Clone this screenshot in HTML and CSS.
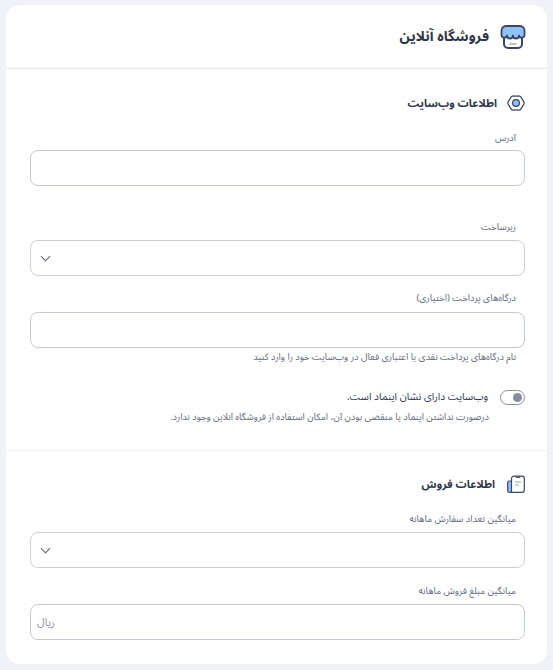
FILE: index.html
```html
<!DOCTYPE html>
<html lang="fa" dir="rtl">
<head>
  <meta charset="utf-8">
  <title>فروشگاه آنلاین</title>
  <link rel="stylesheet" href="styles.css">
</head>
<body>
  <div class="card">
    <div class="card-header">
      <svg class="header-icon" width="26" height="26" viewBox="0 0 26 26">
        <path d="M4 12v8a4 4 0 0 0 4 4h10a4 4 0 0 0 4-4v-8" fill="#fff" stroke="#3b4660" stroke-width="2"/>
        <path d="M6 2h14a4.500 4.500 0 0 1 4.500 4.500v4a2.800 2.800 0 0 1-5.500 1 3 3 0 0 1-6 0 3 3 0 0 1-6 0 2.800 2.800 0 0 1-5.500-1v-4A4.500 4.500 0 0 1 6 2z" fill="#8fc1fb" stroke="#3b4660" stroke-width="1.800" stroke-linejoin="round"/>
        <path d="M9.500 20h7" stroke="#b9bfcc" stroke-width="2"/>
      </svg>
      <h1>فروشگاه آنلاین</h1>
    </div>

    <div class="section">
      <div class="section-title">
        <svg width="18" height="18" viewBox="0 0 18 18">
          <path d="M6.300 1.800Q9 2.600 11.700 1.800 13.200 1.800 14 3.100L16.900 8Q17.400 9 16.900 10L14 14.900Q13.200 16.200 11.700 16.200 9 15.400 6.300 16.200 4.800 16.200 4 14.900L1.100 10Q.6 9 1.100 8L4 3.100Q4.800 1.800 6.300 1.800z" fill="none" stroke="#3b4660" stroke-width="1.300" stroke-linejoin="round"/>
          <circle cx="9" cy="9" r="3.400" fill="#8fc1fb" stroke="#3b4660" stroke-width="1.200"/>
        </svg>
        <h2>اطلاعات وب‌سایت</h2>
      </div>

      <label class="field-label first">آدرس</label>
      <div class="input"></div>

      <label class="field-label second">زیرساخت</label>
      <div class="input select"><span class="chevron"></span></div>

      <label class="field-label third">درگاه‌های پرداخت (اختیاری)</label>
      <div class="input"></div>
      <p class="hint">نام درگاه‌های پرداخت نقدی یا اعتباری فعال در وب‌سایت خود را وارد کنید</p>

      <div class="toggle-row">
        <span class="toggle"><span class="knob"></span></span>
        <span class="toggle-text">وب‌سایت دارای نشان اینماد است.</span>
      </div>
      <p class="toggle-note">درصورت نداشتن اینماد یا منقضی بودن آن، امکان استفاده از فروشگاه آنلاین وجود ندارد.</p>
    </div>

    <div class="section sales">
      <div class="section-title">
        <svg width="18" height="18" viewBox="0 0 18 18">
          <rect x=".7" y="6" width="4.300" height="11.300" rx="1.500" fill="#8fc1fb" stroke="#3b4660" stroke-width="1.200"/>
          <path d="M4.500 17.300H15a2.300 2.300 0 0 0 2.300-2.300V3.500A2.300 2.300 0 0 0 15 1.200H7a2.500 2.500 0 0 0-2.500 2.500z" fill="#fff" stroke="#3b4660" stroke-width="1.200"/>
          <path d="M9 1.200v1.200h4V1.200" fill="none" stroke="#3b4660" stroke-width="1"/>
          <path d="M8 7h6M8 10h4" stroke="#9aa3b5" stroke-width="1"/>
        </svg>
        <h2>اطلاعات فروش</h2>
      </div>

      <label class="field-label first">میانگین تعداد سفارش ماهانه</label>
      <div class="input select"><span class="chevron"></span></div>

      <label class="field-label fourth">میانگین مبلغ فروش ماهانه</label>
      <div class="input with-unit"><span class="unit">ریال</span></div>
    </div>
  </div>
</body>
</html>
```

FILE: styles.css
```css
html, body {
  height: 100%;
}
body {
  margin: 0;
  padding: 5px 6px 6px;
  box-sizing: border-box;
  background: #f0f2f7;
  font-family: "Noto Sans Arabic", "DejaVu Sans", sans-serif;
  color: #2d3648;
  overflow: hidden;
}
.card {
  background: #fff;
  border-radius: 14px;
  height: 659px;
  overflow: hidden;
}
.card-header {
  display: flex;
  align-items: center;
  gap: 11px;
  height: 63px;
  padding-right: 21px;
  border-bottom: 1px solid #e4e6ea;
}
.card-header h1 {
  margin: 0;
  font-size: 14px;
  font-weight: bold;
  color: #2d3648;
}
.section {
  padding: 22px 22px 0 24px;
}
.section.sales {
  padding-top: 21px;
  border-top: 1px solid #f0f1f4;
  margin-top: 26px;
}
.section-title {
  display: flex;
  align-items: center;
  gap: 10px;
  height: 24px;
}
.section-title h2 {
  margin: 0;
  font-size: 11px;
  font-weight: bold;
  color: #2d3648;
}
.sales .section-title h2 {
  margin-right: 2px;
}
.field-label {
  display: block;
  font-size: 9.300px;
  line-height: 14px;
  margin: 16px 9px 6px 0;
  color: #5e6678;
}
.field-label.first {
  margin-bottom: 5px;
}
.sales .field-label.first {
  margin-bottom: 6px;
}
.field-label.second {
  margin-top: 34px;
  margin-bottom: 6px;
}
.field-label.third {
  margin-top: 15px;
  margin-bottom: 7px;
}
.field-label.fourth {
  margin-top: 16px;
  margin-bottom: 6px;
}
.input {
  height: 34px;
  border: 1px solid #c5c8d6;
  border-radius: 8px;
  background: #fff;
  display: flex;
  align-items: center;
}
.select {
  justify-content: flex-end;
  padding-left: 11px;
  border-color: #cdced3;
}
.chevron {
  width: 6px;
  height: 6px;
  border-right: 1px solid #5b6478;
  border-bottom: 1px solid #5b6478;
  transform: rotate(45deg);
  margin-bottom: 4px;
}
.with-unit {
  justify-content: flex-end;
  padding-left: 6px;
}
.unit {
  font-size: 11px;
  color: #8d92a3;
}
.hint {
  margin: 2px 9px 0 0;
  font-size: 9.300px;
  line-height: 14px;
  color: #5e6678;
}
.toggle-row {
  display: flex;
  align-items: center;
  gap: 12px;
  margin-top: 22px;
}
.toggle {
  display: flex;
  align-items: center;
  box-sizing: border-box;
  width: 25px;
  height: 15px;
  padding-right: 2px;
  border: 1px solid #8b90a6;
  border-radius: 8px;
}
.knob {
  width: 9px;
  height: 9px;
  border-radius: 50%;
  background: #868ca3;
}
.toggle-text {
  font-size: 10.300px;
  color: #2d3648;
}
.toggle-note {
  margin: 2px 36px 0 0;
  font-size: 9.300px;
  line-height: 14px;
  color: #5e6678;
}
```
